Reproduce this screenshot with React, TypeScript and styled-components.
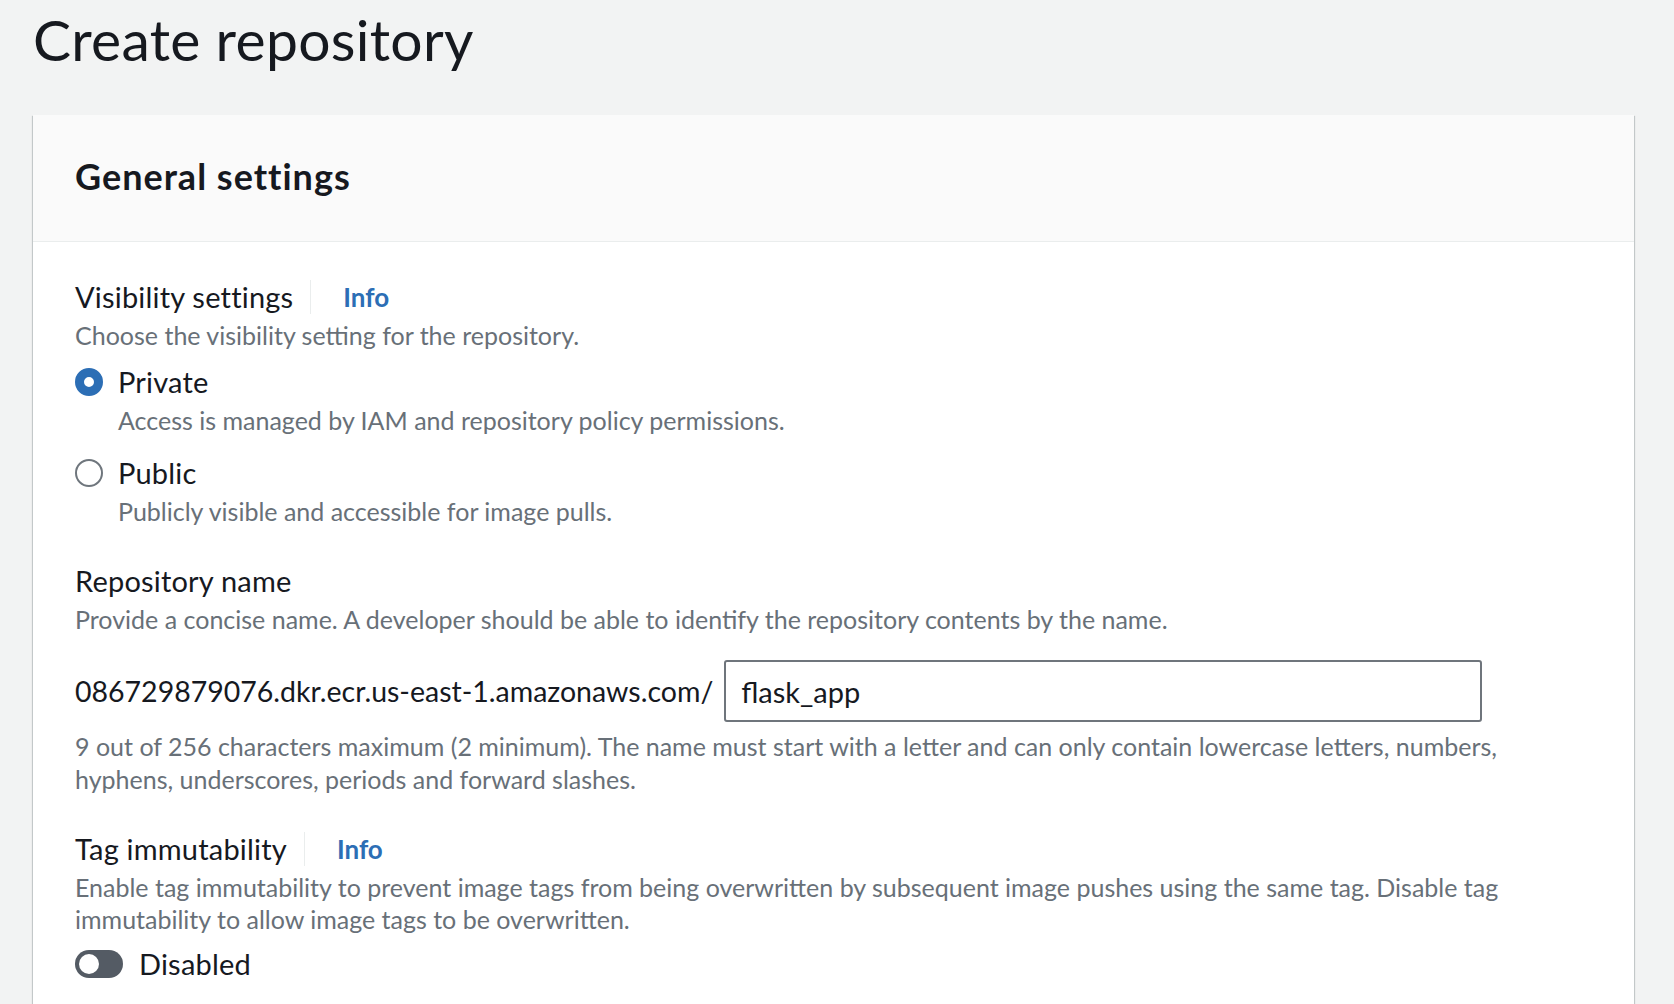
import styled, { createGlobalStyle } from 'styled-components'

const GlobalStyle = createGlobalStyle`
  body {
    margin: 0;
    background: #f2f3f3;
    font-family: Lato, "Liberation Sans", sans-serif;
    color: #16191f;
  }
`

const Page = styled.div`
  padding: 0 40px 0 33px;
`
const PageTitle = styled.h1`
  margin: 9px 0 46px 0;
  font-size: 57px;
  line-height: 60px;
  font-weight: 400;
  letter-spacing: 0.3px;
`
const Card = styled.div`
  background: #fff;
  box-shadow: 0 1px 1px 0 rgba(0, 28, 36, 0.3), 1px 1px 1px 0 rgba(0, 28, 36, 0.15),
    -1px 1px 1px 0 rgba(0, 28, 36, 0.15);
`
const CardHeader = styled.div`
  background: #fafafa;
  border-bottom: 1px solid #eaeded;
  padding: 41px 42px 45px;
`
const CardTitle = styled.h2`
  margin: 0;
  font-size: 36px;
  line-height: 40px;
  font-weight: 700;
  letter-spacing: 1px;
`
const CardBody = styled.div`
  padding: 38px 42px 40px;
`
const Field = styled.div<{ $top?: number }>`
  margin-top: ${(p) => p.$top || 0}px;
`
const LabelRow = styled.div`
  display: flex;
  align-items: center;
`
const Label = styled.div`
  font-size: 29px;
  line-height: 34px;
  letter-spacing: 0.2px;
`
const InfoDivider = styled.span`
  width: 1px;
  height: 34px;
  background: #eaeded;
  margin: 0 32px 0 17px;
`
const InfoLink = styled.a`
  font-size: 26px;
  font-weight: 700;
  color: #2c6eb5;
  text-decoration: none;
`
const Description = styled.div<{ $top?: number; $lh?: number }>`
  font-size: 25px;
  line-height: ${(p) => p.$lh ?? 32}px;
  color: #687078;
  margin-top: ${(p) => p.$top ?? 5}px;
`
const RadioOption = styled.div<{ $top: number }>`
  display: grid;
  grid-template-columns: 28px 1fr;
  column-gap: 15px;
  align-items: center;
  margin-top: ${(p) => p.$top}px;
`
const RadioCircle = styled.span<{ $checked?: boolean }>`
  box-sizing: border-box;
  width: 28px;
  height: 28px;
  border-radius: 50%;
  background: #fff;
  border: ${(p) => (p.$checked ? '9px solid #2c6eb5' : '2px solid #6f767d')};
`
const RadioDesc = styled(Description)`
  grid-column: 2;
`
const NameRow = styled.div`
  display: flex;
  align-items: center;
  margin-top: 25px;
`
const Prefix = styled.span`
  font-size: 28.5px;
  line-height: 34px;
`
const NameInput = styled.input`
  box-sizing: border-box;
  width: 758px;
  height: 62px;
  margin-left: 11px;
  padding: 0 15px;
  border: 2px solid #6f757c;
  border-radius: 3px;
  font-family: inherit;
  font-size: 29px;
  color: #16191f;
  background: #fff;
  outline: none;
`
const ToggleRow = styled.div`
  display: flex;
  align-items: center;
  gap: 16px;
  margin-top: 12px;
`
const Toggle = styled.span`
  position: relative;
  width: 48px;
  height: 28px;
  border-radius: 14px;
  background: #545b64;
`
const Knob = styled.span`
  position: absolute;
  left: 4px;
  top: 4px;
  width: 20px;
  height: 20px;
  border-radius: 50%;
  background: #fff;
`

const LabelWithInfo = ({ text }: { text: string }) => (
  <LabelRow>
    <Label>{text}</Label>
    <InfoDivider />
    <InfoLink href="#">Info</InfoLink>
  </LabelRow>
)

const App = () => {
  return (
    <Page>
      <GlobalStyle />
      <PageTitle>Create repository</PageTitle>
      <Card>
        <CardHeader>
          <CardTitle>General settings</CardTitle>
        </CardHeader>
        <CardBody>
          <Field>
            <LabelWithInfo text="Visibility settings" />
            <Description>Choose the visibility setting for the repository.</Description>
            <RadioOption $top={14}>
              <RadioCircle $checked />
              <Label>Private</Label>
              <RadioDesc>Access is managed by IAM and repository policy permissions.</RadioDesc>
            </RadioOption>
            <RadioOption $top={20}>
              <RadioCircle />
              <Label>Public</Label>
              <RadioDesc>Publicly visible and accessible for image pulls.</RadioDesc>
            </RadioOption>
          </Field>
          <Field $top={37}>
            <Label>Repository name</Label>
            <Description>
              Provide a concise name. A developer should be able to identify the repository contents by
              the name.
            </Description>
            <NameRow>
              <Prefix>086729879076.dkr.ecr.us-east-1.amazonaws.com/</Prefix>
              <NameInput defaultValue="flask_app" />
            </NameRow>
            <Description $top={8} $lh={33}>
              9 out of 256 characters maximum (2 minimum). The name must start with a letter and can only
              contain lowercase letters, numbers, hyphens, underscores, periods and forward slashes.
            </Description>
          </Field>
          <Field $top={36}>
            <LabelWithInfo text="Tag immutability" />
            <Description>
              Enable tag immutability to prevent image tags from being overwritten by subsequent image
              pushes using the same tag. Disable tag immutability to allow image tags to be overwritten.
            </Description>
            <ToggleRow>
              <Toggle>
                <Knob />
              </Toggle>
              <Label>Disabled</Label>
            </ToggleRow>
          </Field>
        </CardBody>
      </Card>
    </Page>
  )
}

export default App
